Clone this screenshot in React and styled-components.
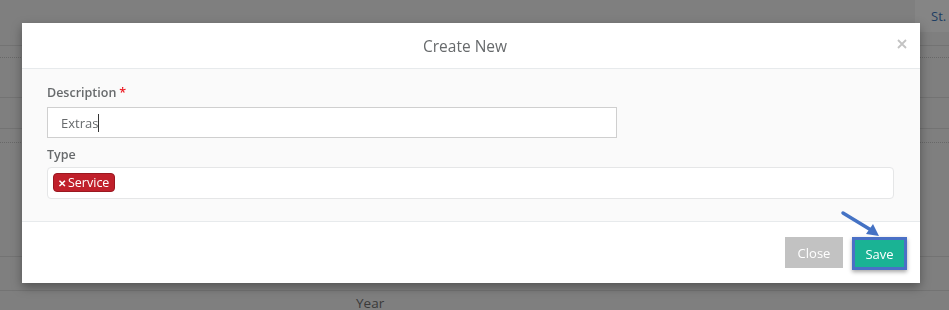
import React from "react";
import styled, { createGlobalStyle } from "styled-components";

const Global = createGlobalStyle`
  html, body { margin: 0; padding: 0; }
  body {
    width: 949px;
    height: 310px;
    overflow: hidden;
    background: #7f7f7f;
    font-family: "Open Sans", "Noto Sans", sans-serif;
  }
`;

const Page = styled.div`
  display: flex;
  flex-direction: column;
  width: 949px;
  height: 310px;
  overflow: hidden;
  background: #7f7f7f;
`;

const Row = styled.div`
  box-sizing: border-box;
  flex-shrink: 0;
  height: ${(p) => p.$h}px;
  border-bottom: ${(p) =>
    p.$line === "dotted"
      ? "1px dotted #686868"
      : p.$line === "solid"
      ? "1px solid #737373"
      : "none"};
  display: flex;
  justify-content: flex-end;
`;

const HeadCell = styled.div`
  width: 34px;
  height: 100%;
  background: #858585;
  color: #1f3e63;
  font-size: 13px;
  line-height: 32px;
  padding-left: 16px;
  box-sizing: border-box;
  white-space: nowrap;
`;

const YearRow = styled.div`
  flex-shrink: 0;
  padding-left: 356px;
  color: #3a3a3a;
  font-size: 13.5px;
  line-height: 13px;
  padding-top: 6px;
`;

const Modal = styled.div`
  position: fixed;
  left: 22px;
  top: 23px;
  width: 898px;
  background: #fff;
  box-shadow: 0 4px 10px rgba(0, 0, 0, 0.35);
  display: flex;
  flex-direction: column;
  color: #676a6c;
`;

const Header = styled.div`
  position: relative;
  height: 45px;
  border-bottom: 1px solid #e7eaec;
  display: flex;
  align-items: center;
  justify-content: center;
  padding: 0 40px 0 28px;
`;

const Title = styled.h4`
  margin: 0;
  font-size: 15.5px;
  font-weight: 400;
  color: #676a6c;
`;

const CloseX = styled.button`
  position: absolute;
  right: 11px;
  top: 14px;
  width: 14px;
  height: 14px;
  padding: 0;
  border: 0;
  background: transparent;
  display: flex;
  align-items: center;
  justify-content: center;
`;

const Body = styled.div`
  background: #fafafa;
  border-bottom: 1px solid #e7eaec;
  padding: 14px 26px 22px 25px;
  display: flex;
  flex-direction: column;
`;

const Group = styled.div`
  display: flex;
  flex-direction: column;
  margin-bottom: ${(p) => p.$mb || 0}px;
`;

const Label = styled.label`
  display: block;
  height: 20px;
  font-size: 12.5px;
  font-weight: 600;
  line-height: 20px;
  color: #676a6c;
  margin-bottom: ${(p) => p.$mb}px;
`;

const Req = styled.span`
  color: #ed1c24;
  margin-left: 3px;
`;

const TextInput = styled.div`
  box-sizing: border-box;
  width: 570px;
  height: 31px;
  border: 1px solid #cfcfcf;
  background: #fff;
  padding: 0 13px;
  display: flex;
  align-items: center;
  font-size: 13px;
  color: #676a6c;
`;

const Caret = styled.span`
  display: inline-block;
  width: 1px;
  height: 18px;
  background: #333;
`;

const TagBox = styled.div`
  box-sizing: border-box;
  height: 32px;
  border: 1px solid #e5e6e7;
  border-radius: 4px;
  background: #fff;
  padding: 5px 5px;
  display: flex;
  align-items: flex-start;
`;

const Tag = styled.span`
  box-sizing: border-box;
  height: 19px;
  display: inline-flex;
  align-items: center;
  gap: 2px;
  padding: 0 5px 0 4px;
  background: #c0202b;
  border: 1px solid #9a1820;
  border-radius: 4px;
  color: #fff;
  font-size: 12.5px;
  line-height: 17px;
`;

const TagX = styled.span`
  font-size: 10px;
  font-weight: 700;
  line-height: 1;
`;

const Footer = styled.div`
  padding: 15px 13px 13px;
  display: flex;
  justify-content: flex-end;
  align-items: flex-start;
  gap: 9px;
`;

const Button = styled.button`
  box-sizing: border-box;
  height: ${(p) => (p.$highlight ? 33 : 31)}px;
  width: ${(p) => p.$w}px;
  padding: 0;
  border: ${(p) => (p.$highlight ? "3px solid #4a70c6" : "0")};
  background: ${(p) => p.$bg};
  color: #fff;
  font-family: inherit;
  font-size: 13px;
  box-shadow: ${(p) => (p.$highlight ? "0 2px 4px rgba(0,0,0,0.35)" : "none")};
`;

const Arrow = styled.svg`
  position: fixed;
  left: 838px;
  top: 208px;
  overflow: visible;
`;

export default function App() {
  return (
    <>
      <Global />
      <Page>
        <Row $h={32}>
          <HeadCell>St.</HeadCell>
        </Row>
        <Row $h={14} $line="solid" />
        <Row $h={12} $line="dotted" />
        <Row $h={40} $line="solid" />
        <Row $h={31} $line="solid" />
        <Row $h={14} $line="dotted" />
        <Row $h={114} $line="solid" />
        <Row $h={34} $line="solid" />
        <YearRow>Year</YearRow>
      </Page>

      <Modal>
        <Header>
          <Title>Create New</Title>
          <CloseX aria-label="close">
            <svg width="10" height="10" viewBox="0 0 10 10">
              <path d="M1 1L9 9M9 1L1 9" stroke="#c3c3c3" strokeWidth="1.8" />
            </svg>
          </CloseX>
        </Header>
        <Body>
          <Group $mb={7}>
            <Label $mb={4}>
              Description<Req>*</Req>
            </Label>
            <TextInput>
              Extras
              <Caret />
            </TextInput>
          </Group>
          <Group>
            <Label $mb={2}>Type</Label>
            <TagBox>
              <Tag>
                <TagX>✕</TagX>Service
              </Tag>
            </TagBox>
          </Group>
        </Body>
        <Footer>
          <Button $w={58} $bg="#c2c2c2">
            Close
          </Button>
          <Button $w={55} $bg="#1ab394" $highlight>
            Save
          </Button>
        </Footer>
      </Modal>

      <Arrow width="44" height="32" viewBox="0 0 44 32">
        <line x1="5" y1="5" x2="33" y2="22" stroke="#4472c4" strokeWidth="3.5" strokeLinecap="round" />
        <polygon points="41,28 28,26 35,16" fill="#4472c4" />
      </Arrow>
    </>
  );
}
